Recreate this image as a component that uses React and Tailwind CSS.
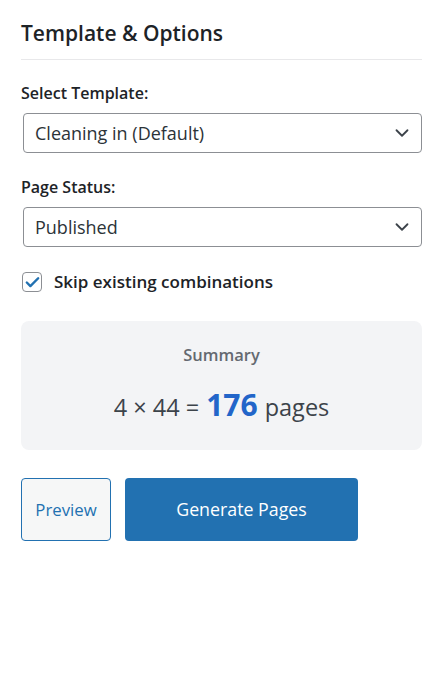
import { ChevronDown, Check } from "lucide-react";

const font = { fontFamily: '"Open Sans", "Noto Sans", sans-serif' };

const SelectBox = ({ value }) => (
  <div className="flex items-center justify-between h-[40px] ml-[2px] pl-[11px] pr-[8px] border border-[#8c8f94] rounded-[4px] bg-white">
    <span className="text-[18px] text-[#2c3338] leading-[24px]">{value}</span>
    <ChevronDown size={22} strokeWidth={2} className="text-[#3c434a]" />
  </div>
);

export default function App() {
  return (
    <div className="w-[443px] h-[688px] bg-white px-[21px] pt-[18px]" style={font}>
      {/* HEADER */}
      <div className="pb-[10px] border-b border-[#e8e8ea]">
        <h2 className="text-[21px] font-semibold text-[#1d2327] leading-[31px]">
          Template &amp; Options
        </h2>
      </div>

      {/* TEMPLATE */}
      <div className="mt-[22px]">
        <label className="block text-[16px] font-semibold text-[#1d2327] leading-[22px] mb-[9px]">
          Select Template:
        </label>
        <SelectBox value="Cleaning in (Default)" />
      </div>

      {/* STATUS */}
      <div className="mt-[23px]">
        <label className="block text-[16px] font-semibold text-[#1d2327] leading-[22px] mb-[9px]">
          Page Status:
        </label>
        <SelectBox value="Published" />
      </div>

      {/* CHECKBOX */}
      <div className="flex items-center gap-[12px] mt-[24px] ml-[1px]">
        <span className="flex items-center justify-center w-[20px] h-[20px] rounded-[4px] border border-[#8c8f94] bg-white">
          <Check size={17} strokeWidth={3.4} className="text-[#2271b1]" />
        </span>
        <span className="text-[17px] font-semibold text-[#1d2327] leading-[22px]">
          Skip existing combinations
        </span>
      </div>

      {/* SUMMARY */}
      <div className="mt-[28px] rounded-[8px] bg-[#f3f4f6] h-[129px] flex flex-col items-center pt-[22px]">
        <div className="text-[16.5px] font-semibold text-[#646970] leading-[24px]">Summary</div>
        <div className="mt-[15px] flex items-baseline text-[23.5px] text-[#3c434a]">
          <span>4 × 44 =</span>
          <span className="mx-[7px] text-[30px] font-bold text-[#2265c9]">176</span>
          <span>pages</span>
        </div>
      </div>

      {/* ACTIONS */}
      <div className="flex gap-[14px] mt-[28px]">
        <button className="w-[90px] h-[63px] rounded-[4px] border border-[#2271b1] bg-[#f6f7f7] text-[16.8px] text-[#2271b1]">
          Preview
        </button>
        <button className="w-[233px] h-[63px] rounded-[4px] bg-[#2271b1] text-[17.8px] text-white">
          Generate Pages
        </button>
      </div>
    </div>
  );
}
